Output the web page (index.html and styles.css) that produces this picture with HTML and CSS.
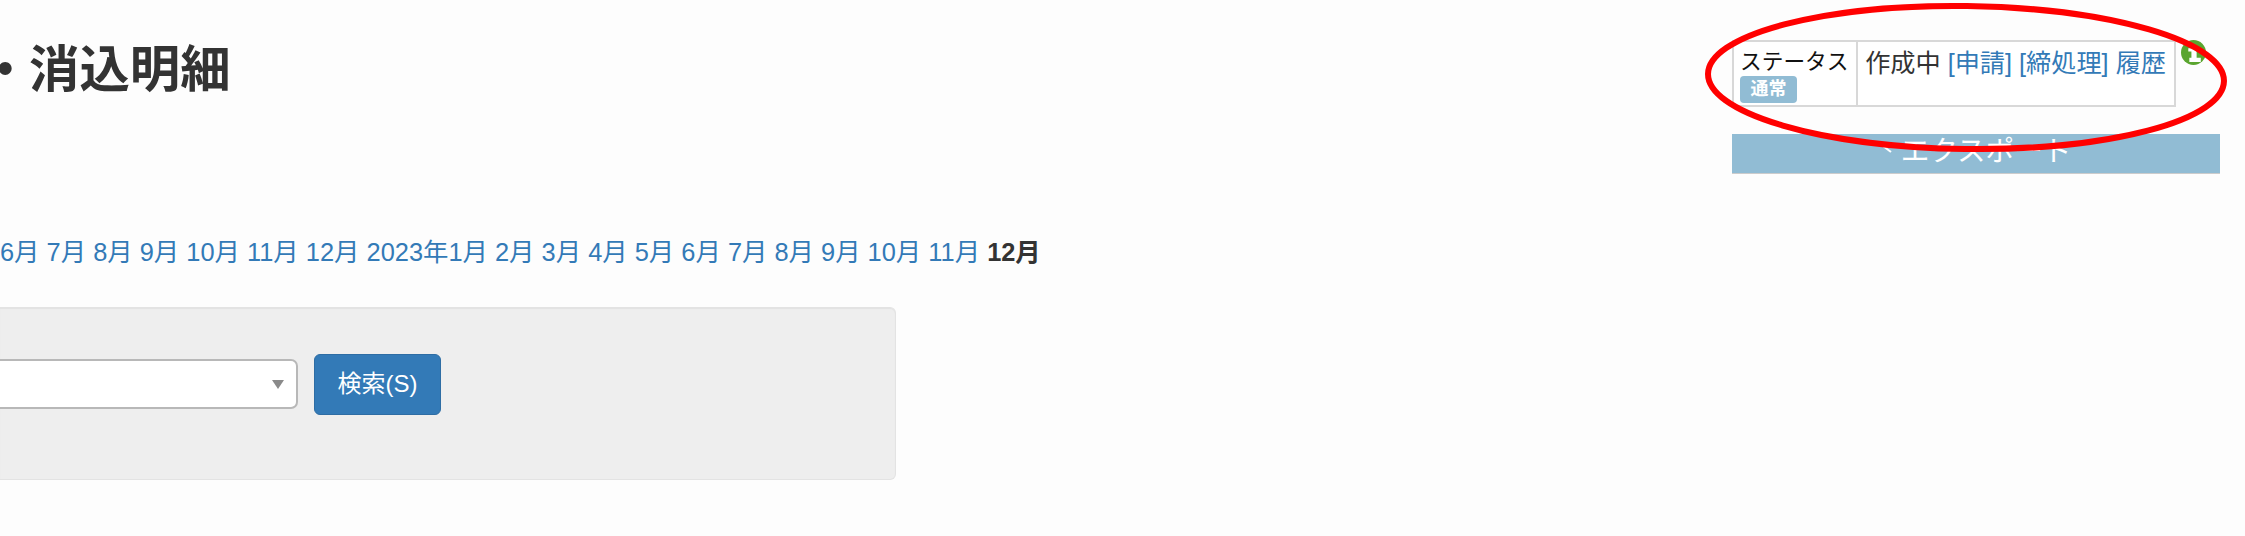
FILE: index.html
```html
<!DOCTYPE html>
<html lang="ja">
<head>
<meta charset="utf-8">
<title>消込明細</title>
<link rel="stylesheet" href="styles.css">
</head>
<body>
<div class="page">
  <header class="top">
    <h1 class="title"><span class="dot">・</span>消込明細</h1>
    <div class="side">
      <div class="status-row">
        <table class="status">
          <tr>
            <th>ステータス<span class="tag">通常</span></th>
            <td>作成中 <a href="#">[申請]</a> <a href="#">[締処理]</a> <a href="#">履歴</a></td>
          </tr>
        </table>
        <svg class="up" viewBox="0 0 24 24" aria-hidden="true">
          <circle cx="12" cy="12" r="12" fill="#5aa52f"/>
          <path d="M7 8h3V5h5v12h4v4H8v-4h2v-6H7z" fill="#fff"/>
        </svg>
      </div>
      <div class="export">
        <svg class="export-icon" viewBox="0 0 20 20" aria-hidden="true"><path d="M2 5l8 6" fill="none" stroke="#fff" stroke-width="2"/></svg>
        <span>エクスポート</span>
      </div>
    </div>
  </header>
  <nav class="months"><a href="#">6月</a> <a href="#">7月</a> <a href="#">8月</a> <a href="#">9月</a> <a href="#">10月</a> <a href="#">11月</a> <a href="#">12月</a> <a href="#">2023年1月</a> <a href="#">2月</a> <a href="#">3月</a> <a href="#">4月</a> <a href="#">5月</a> <a href="#">6月</a> <a href="#">7月</a> <a href="#">8月</a> <a href="#">9月</a> <a href="#">10月</a> <a href="#">11月</a> <b>12月</b></nav>
  <section class="panel">
    <div class="select"><span class="arrow"></span></div>
    <button class="search" type="button">検索(S)</button>
  </section>
</div>
<svg class="mark" viewBox="0 0 2245 536" aria-hidden="true">
  <ellipse cx="1966" cy="77.5" rx="258" ry="71.5" fill="none" stroke="#f00" stroke-width="6" transform="rotate(0.8 1966 77)"/>
</svg>
</body>
</html>
```
FILE: styles.css
```css
html, body { margin: 0; height: 100%; }
body {
  background: #fdfdfd;
  color: #333;
  font-family: "Liberation Sans", "Noto Sans CJK JP", sans-serif;
  font-size: 25.2px;
  line-height: 30px;
  overflow: hidden;
  position: relative;
  width: 2245px;
  height: 536px;
}
a { color: #337ab7; text-decoration: none; }
.page { display: flex; flex-direction: column; }
.top {
  display: flex;
  justify-content: space-between;
  align-items: flex-start;
  height: 230px;
  padding: 40px 25px 0 0;
  box-sizing: border-box;
}
.title {
  margin: 2px 0 0;
  font-size: 50.4px;
  line-height: 56px;
  font-weight: 700;
  color: #333;
}
.dot { display: inline-block; width: 30px; margin-left: -20px; margin-right: 19px; text-align: left; }
.side { display: flex; flex-direction: column; width: 488px; gap: 27px; }
.status-row { display: flex; align-items: flex-start; }
.status {
  border-collapse: collapse;
  width: 444px;
  height: 66px;
  background: #fff;
}
.status th, .status td {
  border: 2px solid #d8d8d8;
  vertical-align: top;
  text-align: left;
  font-weight: 400;
  white-space: nowrap;
}
.status td { padding: 6px 8px 2px 7px; }
.status th {
  width: 113px;
  padding: 5px 4px 2px 6px;
  color: #111;
  font-size: 21.7px;
  line-height: 29px;
}
.tag {
  display: block;
  width: 57px;
  height: 27px;
  border-radius: 4px;
  background: #91bcd4;
  color: #fff;
  font-size: 18px;
  font-weight: 700;
  line-height: 27px;
  text-align: center;
}
.up { width: 25px; height: 25px; margin-left: 5px; }
.export {
  display: flex;
  justify-content: center;
  align-items: center;
  height: 40px;
  padding-bottom: 6px;
  background: #91bcd4;
  border-bottom: 1px solid #ccc;
  box-sizing: border-box;
  color: #fff;
  font-size: 28.6px;
  line-height: 36px;
}
.export-icon { width: 20px; height: 20px; }
.months { height: 77px; font-size: 25.4px; line-height: 44px; white-space: nowrap; }
.panel {
  display: flex;
  align-items: center;
  gap: 16px;
  width: 896px;
  height: 173px;
  padding-bottom: 19px;
  box-sizing: border-box;
  background: #eee;
  border: 1px solid #e3e3e3;
  border-left: 0;
  border-radius: 0 6px 6px 0;
  box-shadow: inset 0 1px 1px rgba(0,0,0,.05);
}
.select {
  position: relative;
  width: 298px;
  height: 50px;
  box-sizing: border-box;
  background: #fff;
  border: 2px solid #b8b8b8;
  border-left: 0;
  border-radius: 0 7px 7px 0;
}
.arrow {
  position: absolute;
  right: 12px;
  top: 19px;
  border-left: 6px solid transparent;
  border-right: 6px solid transparent;
  border-top: 9px solid #8a8a8a;
}
.search {
  width: 127px;
  height: 61px;
  padding: 0;
  background: #337ab7;
  border: 1px solid #2e6da4;
  border-radius: 6px;
  color: #fff;
  font: inherit;
  font-size: 24px;
}
.mark { position: absolute; left: 0; top: 0; width: 2245px; height: 536px; pointer-events: none; }
```
